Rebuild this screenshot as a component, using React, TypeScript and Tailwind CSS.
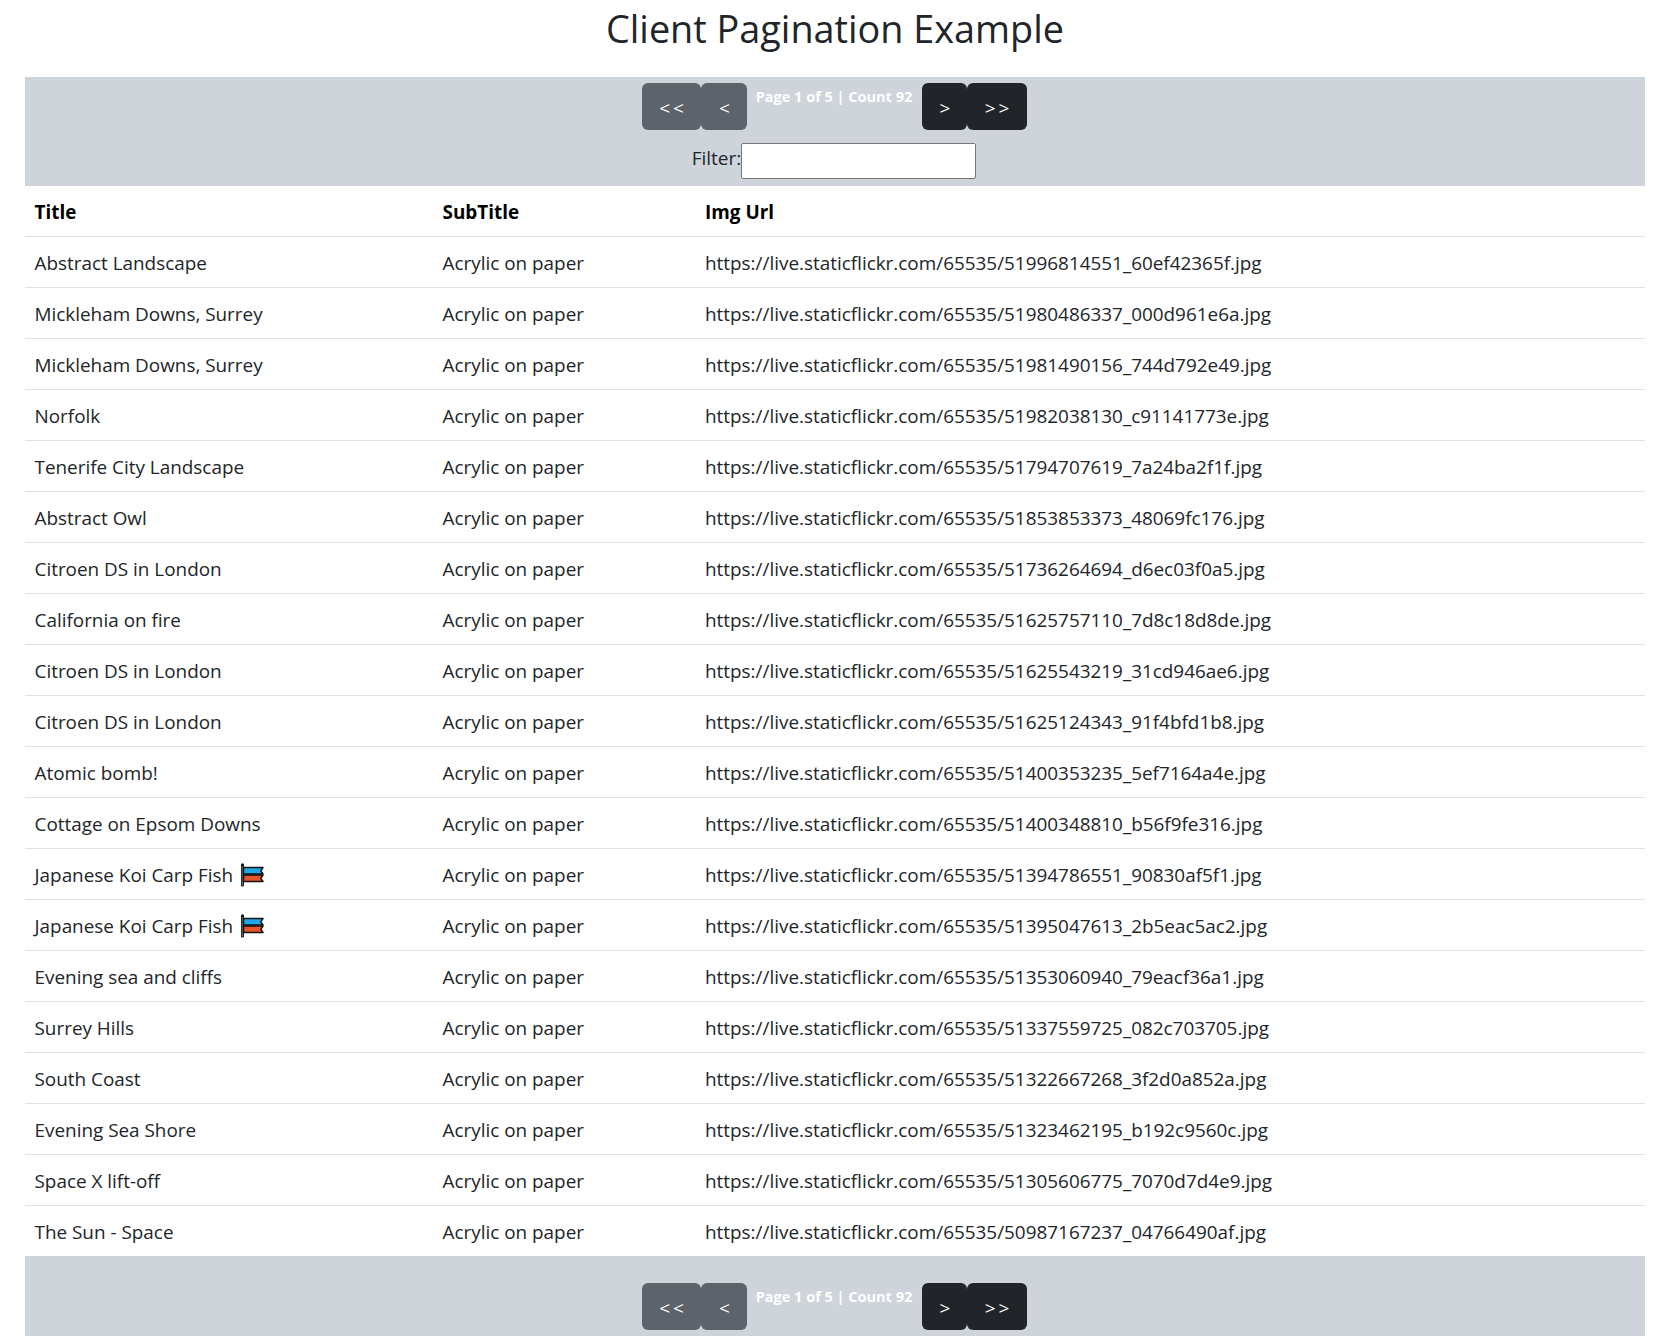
import React from 'react';

const rows: [string, string][] = [
  ['Abstract Landscape', '51996814551_60ef42365f'],
  ['Mickleham Downs, Surrey', '51980486337_000d961e6a'],
  ['Mickleham Downs, Surrey', '51981490156_744d792e49'],
  ['Norfolk', '51982038130_c91141773e'],
  ['Tenerife City Landscape', '51794707619_7a24ba2f1f'],
  ['Abstract Owl', '51853853373_48069fc176'],
  ['Citroen DS in London', '51736264694_d6ec03f0a5'],
  ['California on fire', '51625757110_7d8c18d8de'],
  ['Citroen DS in London', '51625543219_31cd946ae6'],
  ['Citroen DS in London', '51625124343_91f4bfd1b8'],
  ['Atomic bomb!', '51400353235_5ef7164a4e'],
  ['Cottage on Epsom Downs', '51400348810_b56f9fe316'],
  ['Japanese Koi Carp Fish', '51394786551_90830af5f1'],
  ['Japanese Koi Carp Fish', '51395047613_2b5eac5ac2'],
  ['Evening sea and cliffs', '51353060940_79eacf36a1'],
  ['Surrey Hills', '51337559725_082c703705'],
  ['South Coast', '51322667268_3f2d0a852a'],
  ['Evening Sea Shore', '51323462195_b192c9560c'],
  ['Space X lift-off', '51305606775_7070d7d4e9'],
  ['The Sun - Space', '50987167237_04766490af'],
];

const CarpStreamer = () => (
  <svg viewBox="0 0 24 24" className="inline-block w-6 h-6 ml-[7px] align-[-5px]">
    <rect x="1.5" y="2" width="2" height="21" fill="#5a6066" stroke="#111" strokeWidth="0.8" />
    <circle cx="2.5" cy="1.8" r="1.5" fill="#111" />
    <path d="M3.5 4.5h19.5l-2.2 3.3 2.2 3.2H3.5z" fill="#1fa8e8" stroke="#111" strokeWidth="1.5" strokeLinejoin="round" />
    <path d="M3.5 12h19.5l-2.2 3.3 2.2 3.2H3.5z" fill="#e8552a" stroke="#111" strokeWidth="1.5" strokeLinejoin="round" />
  </svg>
);

const Pager = () => (
  <div className="flex justify-center pr-[2px]">
    <button className="h-[47px] w-[59px] pt-[4px] pl-[4px] rounded-md bg-[#5c636a] text-white text-[19px] tracking-[3px]">{'<<'}</button>
    <button className="h-[47px] w-[46px] pt-[4px] pl-[2px] rounded-md bg-[#5c636a] text-white text-[19px]">{'<'}</button>
    <span className="w-[175px] pt-[3px] text-center text-[14.5px] leading-[22px] font-bold text-white">Page 1 of 5 | Count 92</span>
    <button className="h-[47px] w-[45px] pt-[4px] pl-[2px] rounded-md bg-[#212529] text-white text-[19px]">{'>'}</button>
    <button className="h-[47px] w-[60px] pt-[4px] pl-[4px] rounded-md bg-[#212529] text-white text-[19px] tracking-[3px]">{'>>'}</button>
  </div>
);

export default function App() {
  return (
    <div className="pl-[25px] pr-[29px] font-['Open_Sans','Noto_Sans',sans-serif] text-[#212529] bg-white">
      <h1 className="h-[77px] pt-[4px] text-center text-[37.8px] leading-[50px] font-normal">Client Pagination Example</h1>

      <div className="bg-[#ced4da] h-[109px] pt-[6px]">
        <Pager />
        <div className="mt-[13px] flex justify-center items-center pr-[2px] text-[19px]">
          <span className="leading-[30px] pb-[6px]">Filter:</span>
          <input className="w-[235px] h-[36px] bg-white border border-[#767676] rounded-[2px]" />
        </div>
      </div>

      <table className="w-full border-collapse text-[18.9px] leading-[30px]">
        <thead>
          <tr className="border-b border-[#dee2e6] text-black">
            <th className="h-[50px] pl-[9.5px] pt-[2px] text-left font-bold w-[408px]">Title</th>
            <th className="pl-[9.5px] pt-[2px] text-left font-bold w-[263px]">SubTitle</th>
            <th className="pl-[9px] pt-[2px] text-left font-bold">Img Url</th>
          </tr>
        </thead>
        <tbody>
          {rows.map(([title, id], i) => (
            <tr key={id} className={i < rows.length - 1 ? 'border-b border-[#dee2e6]' : ''}>
              <td className="h-[51px] pl-[9.5px] pt-[2px]">
                {title}
                {title.startsWith('Japanese') && <CarpStreamer />}
              </td>
              <td className="pl-[9.5px] pt-[2px]">Acrylic on paper</td>
              <td className="pl-[9px] pt-[2px]">{`https://live.staticflickr.com/65535/${id}.jpg`}</td>
            </tr>
          ))}
        </tbody>
      </table>

      <div className="bg-[#ced4da] h-[80px] pt-[27px]">
        <Pager />
      </div>
    </div>
  );
}
